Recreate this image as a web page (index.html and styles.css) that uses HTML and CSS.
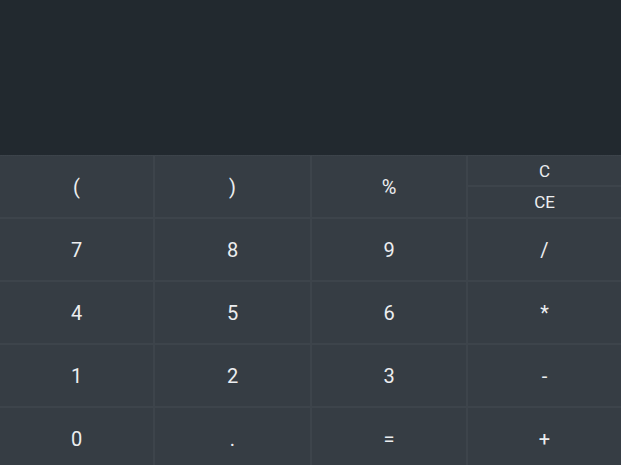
FILE: index.html
```html
<!DOCTYPE html>
<html>
<head>
<meta charset="utf-8">
<link rel="stylesheet" href="styles.css">
</head>
<body>
<div class="app">
  <div class="display"></div>
  <div class="pad">
    <button class="key">(</button>
    <button class="key">)</button>
    <button class="key">%</button>
    <div class="split">
      <button class="key small">C</button>
      <button class="key small">CE</button>
    </div>
    <button class="key">7</button>
    <button class="key">8</button>
    <button class="key">9</button>
    <button class="key">/</button>
    <button class="key">4</button>
    <button class="key">5</button>
    <button class="key">6</button>
    <button class="key">*</button>
    <button class="key">1</button>
    <button class="key">2</button>
    <button class="key">3</button>
    <button class="key">-</button>
    <button class="key">0</button>
    <button class="key">.</button>
    <button class="key">=</button>
    <button class="key">+</button>
  </div>
</div>
</body>
</html>
```
FILE: styles.css
```css
html, body {
  margin: 0;
  padding: 0;
  background: #363d44;
  overflow: hidden;
}
.app {
  width: 621px;
  height: 465px;
  overflow: hidden;
  font-family: Roboto, "Noto Sans", sans-serif;
}
.display {
  height: 155px;
  background: #22292f;
}
.pad {
  display: grid;
  grid-template-columns: 153px 155px 154px 153px;
  grid-template-rows: repeat(5, 61px);
  gap: 2px;
  background: #3d444b;
  border-top: 1px dotted #3b4249;
}
.key {
  border: 0;
  margin: 0;
  padding: 0;
  background: #363d44;
  color: #eceef0;
  font-family: Roboto, "Noto Sans", sans-serif;
  font-size: 20px;
  display: flex;
  align-items: center;
  justify-content: center;
}
.split {
  display: grid;
  grid-template-rows: 29px 30px;
  gap: 2px;
  background: #3d444b;
}
.key.small {
  font-size: 17px;
}
```
